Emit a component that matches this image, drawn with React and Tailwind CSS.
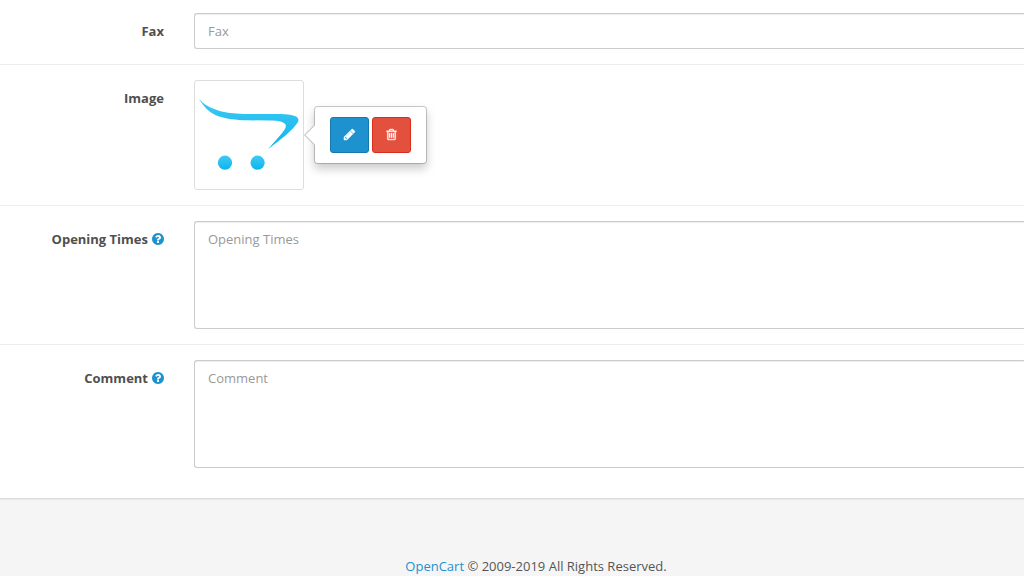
import React from 'react'

const control =
  'block w-full rounded-l-[3px] border border-r-0 border-[#ccc] bg-white px-[13px] text-[13px] leading-5 text-[#555] shadow-[inset_0_1px_1px_rgba(0,0,0,0.075)] outline-none placeholder:text-[#999] placeholder:opacity-100 focus:border-[#66afe9]'

function HelpIcon() {
  return (
    <svg viewBox="128 128 1536 1536" className="size-3 shrink-0 fill-[#1e91cf]" aria-hidden="true">
      <path d="M1024 1376v-192q0-14-9-23t-23-9h-192q-14 0-23 9t-9 23v192q0 14 9 23t23 9h192q14 0 23-9t9-23zm256-672q0-88-55.5-163t-138.5-116-170-41q-243 0-371 213-15 24 8 42l132 100q7 6 19 6 16 0 25-12 53-68 86-92 34-24 86-24 48 0 85.5 26t37.5 59q0 38-20 61t-68 45q-63 28-115.5 86.5t-52.5 125.5v36q0 14 9 23t23 9h192q14 0 23-9t9-23q0-19 21.5-49.5t54.5-49.5q32-18 49-28.5t46-35 44.5-48 28-60.5 12.5-81zm384 192q0 209-103 385.5t-279.5 279.5-385.5 103-385.5-103-279.5-279.5-103-385.5 103-385.5 279.5-279.5 385.5-103 385.5 103 279.5 279.5 103 385.5z" />
    </svg>
  )
}

function PencilIcon() {
  return (
    <svg viewBox="0 0 1792 1792" className="size-[13px] fill-white stroke-white" strokeWidth="50" aria-hidden="true">
      <path d="M491 1536l91-91-235-235-91 91v107h128v128h107zm523-928q0-22-22-22-10 0-17 7l-542 542q-7 7-7 17 0 22 22 22 10 0 17-7l542-542q7-7 7-17zm-54-192l416 416-832 832h-416v-416zm683 96q0 53-37 90l-166 166-416-416 166-165q36-38 90-38 53 0 91 38l235 234q37 39 37 91z" />
    </svg>
  )
}

function TrashIcon() {
  return (
    <svg viewBox="0 0 1792 1792" className="size-[13px] fill-white stroke-white" strokeWidth="50" aria-hidden="true">
      <path d="M704 736v576q0 14-9 23t-23 9h-64q-14 0-23-9t-9-23v-576q0-14 9-23t23-9h64q14 0 23 9t9 23zm256 0v576q0 14-9 23t-23 9h-64q-14 0-23-9t-9-23v-576q0-14 9-23t23-9h64q14 0 23 9t9 23zm256 0v576q0 14-9 23t-23 9h-64q-14 0-23-9t-9-23v-576q0-14 9-23t23-9h64q14 0 23 9t9 23zm128 724v-948h-896v948q0 22 7 40.5t14.5 27 10.5 8.5h832q3 0 10.5-8.5t14.5-27 7-40.5zm-672-1076h448l-48-117q-7-9-17-11h-317q-10 2-17 11zm928 32v64q0 14-9 23t-23 9h-96v948q0 83-47 143.5t-113 60.5h-832q-66 0-113-58.5t-47-141.5v-952h-96q-14 0-23-9t-9-23v-64q0-14 9-23t23-9h309l70-167q15-37 54-63t79-26h320q40 0 79 26t54 63l70 167h309q14 0 23 9t9 23z" />
    </svg>
  )
}

function CartLogo() {
  return (
    <svg viewBox="0 0 100 100" className="size-[100px]" aria-hidden="true">
      <defs>
        <linearGradient id="swoosh" x1="0" y1="0" x2="0" y2="1">
          <stop offset="0" stopColor="#3fcaf3" />
          <stop offset="1" stopColor="#0cb4ee" />
        </linearGradient>
      </defs>
      <path
        fill="url(#swoosh)"
        d="M0 13.800C4.500 19.300 11.500 23.500 21.500 26.200C31.500 28.500 42 29 54 29H76C88 29 99.800 30 99.500 35C99.300 38.500 93 44.500 86.500 50.500L69 64.300L81 50.500C84.500 46.500 87.500 43 86.800 40.300C85.500 36.500 79.500 35.600 70.500 35.500L48.500 35.300C36.500 35 28 34 20 31.500C10 28 4 21 0 13.800Z"
      />
      <circle cx="26" cy="77.700" r="7.100" fill="url(#swoosh)" />
      <circle cx="58.600" cy="77.700" r="7.100" fill="url(#swoosh)" />
    </svg>
  )
}

// Floating edit / remove actions, anchored to the right of the thumbnail.
function ImagePopover() {
  return (
    <div className="absolute top-1/2 left-full z-10 ml-[10px] flex -translate-y-1/2 gap-[3px] rounded-[4px] border border-black/20 bg-white bg-clip-padding px-[15px] py-[10px] shadow-[0_5px_10px_rgba(0,0,0,0.2)]">
      <svg viewBox="0 0 11 22" className="absolute top-1/2 right-full h-[22px] w-[11px] -translate-y-1/2" aria-hidden="true">
        <path d="M11 0L0 11L11 22Z" fill="#c4c4c4" />
        <path d="M11 1.400L1.400 11L11 20.600Z" fill="#fff" />
      </svg>
      <button
        type="button"
        aria-label="Edit"
        className="flex h-9 w-[39px] items-center justify-center rounded-[3px] border border-[#1978ab] bg-[#1e91cf] pb-px hover:bg-[#1872a2]"
      >
        <PencilIcon />
      </button>
      <button
        type="button"
        aria-label="Remove"
        className="flex h-9 w-[39px] items-center justify-center rounded-[3px] border border-[#d92e1b] bg-[#e3503e] pb-px hover:bg-[#dc2f1a]"
      >
        <TrashIcon />
      </button>
    </div>
  )
}

function Row({ label, htmlFor, help, first, children }) {
  return (
    <div className={first ? 'flex gap-[30px] pt-[13px] pb-[15px]' : 'flex gap-[30px] border-t border-[#ededed] py-[15px]'}>
      <label
        htmlFor={htmlFor}
        className="flex h-9 w-[164px] shrink-0 items-center justify-end gap-1 font-bold whitespace-nowrap"
      >
        {label}
        {help && <HelpIcon />}
      </label>
      <div className="min-w-0 flex-1">{children}</div>
    </div>
  )
}

export default function App() {
  return (
    <div className="min-h-screen overflow-hidden bg-[#f5f5f5] font-['Open_Sans',sans-serif] text-[13px] leading-5 text-[#555]">
      <form className="border-b border-[#dcdcdc] bg-white pb-[15px] text-[#4f4f4f] shadow-[0_1px_1px_rgba(0,0,0,0.05)]">
        <Row label="Fax" htmlFor="input-fax" first>
          <input id="input-fax" type="text" placeholder="Fax" className={`${control} h-9`} />
        </Row>
        <Row label="Image" htmlFor="input-image">
          <div className="relative w-fit">
            <button
              id="input-image"
              type="button"
              className="block rounded-[3px] border border-[#ddd] bg-white p-1"
            >
              <CartLogo />
            </button>
            <ImagePopover />
          </div>
        </Row>
        <Row label="Opening Times" htmlFor="input-open" help>
          <textarea id="input-open" placeholder="Opening Times" className={`${control} h-[108px] resize-none py-[7px]`} />
        </Row>
        <Row label="Comment" htmlFor="input-comment" help>
          <textarea id="input-comment" placeholder="Comment" className={`${control} h-[108px] resize-none py-[7px]`} />
        </Row>
      </form>
      <footer className="pt-[57px] pl-12 text-center">
        <a href="#opencart" className="text-[#1e91cf] hover:underline">
          OpenCart
        </a>{' '}
        © 2009-2019 All Rights Reserved.
      </footer>
    </div>
  )
}
